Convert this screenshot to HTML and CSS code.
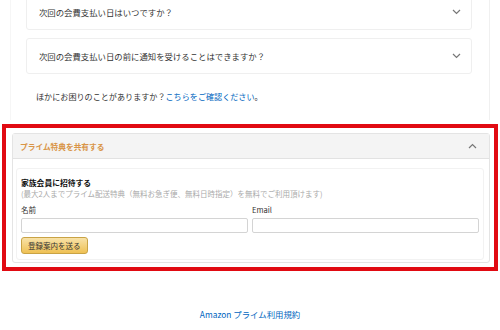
FILE: index.html
```html
<!DOCTYPE html>
<html lang="ja">
<head>
  <meta charset="UTF-8">
  <title>Amazon プライム</title>
  <link rel="stylesheet" href="styles.css">
</head>
<body>

  <div class="faq">
    <div class="faq-list">
      <div class="faq-item">
        <span>次回の会費支払い日はいつですか？</span>
        <svg class="chev" width="9" height="6" viewBox="0 0 9 6"><polyline points="1,1 4.5,4.5 8,1" /></svg>
      </div>
      <div class="faq-item">
        <span>次回の会費支払い日の前に通知を受けることはできますか？</span>
        <svg class="chev" width="9" height="6" viewBox="0 0 9 6"><polyline points="1,1 4.5,4.5 8,1" /></svg>
      </div>
    </div>
    <p class="help">ほかにお困りのことがありますか？<a href="#">こちらをご確認ください</a>。</p>
  </div>

  <div class="highlight">
    <div class="share-card">
      <div class="share-head">
        <span>プライム特典を共有する</span>
        <svg class="chev" width="9" height="6" viewBox="0 0 9 6"><polyline points="1,5 4.5,1.5 8,5" /></svg>
      </div>
      <div class="share-body">
        <div class="invite">
          <div class="invite-title">家族会員に招待する</div>
          <div class="invite-note">(最大2人までプライム配送特典（無料お急ぎ便、無料日時指定）を無料でご利用頂けます)</div>
          <div class="fields">
            <label class="field">
              <span>名前</span>
              <input type="text">
            </label>
            <label class="field">
              <span>Email</span>
              <input type="text">
            </label>
          </div>
          <button class="send">登録案内を送る</button>
        </div>
      </div>
    </div>
  </div>

  <div class="footer">
    <a href="#">Amazon プライム利用規約</a>
  </div>

</body>
</html>
```

FILE: styles.css
```css
body {
  margin: 0;
  background: #fff;
  font-family: "Noto Sans CJK JP", "Noto Sans", sans-serif;
  font-size: 8px;
  color: #333;
}

a {
  color: #0066c0;
  text-decoration: none;
}

.chev {
  display: block;
  fill: none;
  stroke: #777;
  stroke-width: 1.2;
}

.faq {
  display: flow-root;
  margin: 0 10px;
  padding: 0 17px 0 15px;
  height: 120px;
  border-left: 1px solid #f6f6f6;
  border-right: 1px solid #f0f0f0;
}

.faq-list {
  margin-top: -6px;
  display: flex;
  flex-direction: column;
  gap: 8px;
}

.faq-item {
  height: 34px;
  display: flex;
  align-items: center;
  justify-content: space-between;
  padding: 0 10px 0 12px;
  border: 1px solid #efefef;
  border-radius: 3px;
  font-size: 8.4px;
}

.help {
  margin: 17px 0 0 10px;
  line-height: 12px;
  font-size: 8.1px;
}

.highlight {
  margin: 4px 2px 0;
  border: 4px solid #e10a12;
  padding: 5px 4px 4px 6px;
}

.share-card {
  border: 1px solid #e4e4e4;
  border-radius: 3px;
}

.share-head {
  height: 24px;
  display: flex;
  align-items: center;
  justify-content: space-between;
  padding: 0 12px 0 7px;
  background: #f4f4f4;
  border-bottom: 1px solid #e2e2e2;
  color: #d99447;
  font-weight: bold;
  font-size: 7.7px;
}

.share-body {
  padding: 9px 5px 2px 3px;
}

.invite {
  border: 1px solid #f2f2f2;
  border-radius: 3px;
  padding: 8px 4px 5px;
}

.invite-title {
  font-weight: bold;
  font-size: 7.8px;
  line-height: 11px;
  color: #111;
}

.invite-note {
  font-size: 7.5px;
  line-height: 11px;
  color: #aaa;
}

.fields {
  margin-top: 6px;
  display: grid;
  grid-template-columns: 1fr 1fr;
  gap: 4px;
}

.field {
  display: flex;
  flex-direction: column;
  gap: 3px;
  font-size: 7.6px;
  line-height: 10px;
}

.field input {
  box-sizing: border-box;
  height: 15px;
  width: 100%;
  margin: 0;
  border: 1px solid #d4d4d4;
  border-radius: 2px;
  background: #fff;
}

.send {
  display: block;
  box-sizing: border-box;
  margin-top: 4px;
  height: 17px;
  padding: 0 6px;
  font-family: inherit;
  font-size: 7.5px;
  color: #333;
  background: linear-gradient(to bottom, #f8e2a8, #efc154);
  border: 1px solid #c9a345;
  border-radius: 3px;
}

.footer {
  margin-top: 37px;
  text-align: center;
  font-size: 8.4px;
  line-height: 12px;
}
```
